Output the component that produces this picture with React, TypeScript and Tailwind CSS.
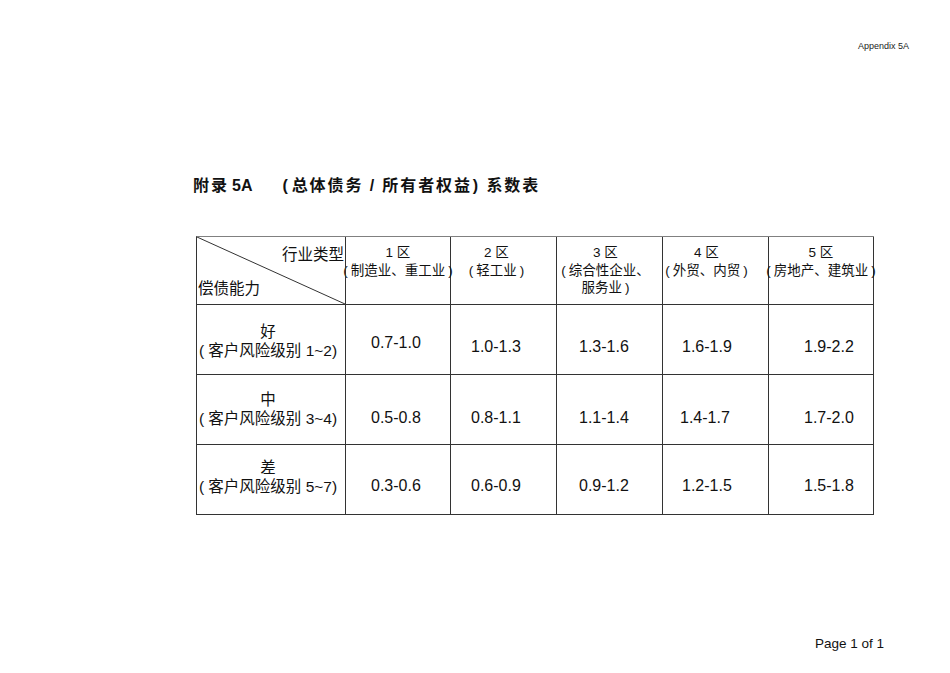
import React from "react";

const F = { fontFamily: '"Liberation Sans", "Noto Sans CJK SC", sans-serif' };

type HLine = { t: string; open?: boolean; close?: boolean };

const headers: { lines: HLine[]; pr: string }[] = [
  { lines: [{ t: "1 区" }, { t: "制造业、重工业", open: true, close: true }], pr: "pr-0" },
  { lines: [{ t: "2 区" }, { t: "轻工业", open: true, close: true }], pr: "pr-[14px]" },
  { lines: [{ t: "3 区" }, { t: "综合性企业、", open: true }, { t: "服务业", close: true }], pr: "pr-[8px]" },
  { lines: [{ t: "4 区" }, { t: "外贸、内贸", open: true, close: true }], pr: "pr-[18px]" },
  { lines: [{ t: "5 区" }, { t: "房地产、建筑业", open: true, close: true }], pr: "pr-0" },
];

const rows = [
  { label: "好", sub: "( 客户风险级别 1~2)", pt: "pt-[16px]", vals: ["0.7-1.0", "1.0-1.3", "1.3-1.6", "1.6-1.9", "1.9-2.2"], vpt: ["pt-[29px]", "pt-[33px]", "pt-[33px]", "pt-[33px]", "pt-[33px]"], vpl: ["pl-[25px]", "pl-[20px]", "pl-[22px]", "pl-[19px]", "pl-[35px]"] },
  { label: "中", sub: "( 客户风险级别 3~4)", pt: "pt-[14px]", vals: ["0.5-0.8", "0.8-1.1", "1.1-1.4", "1.4-1.7", "1.7-2.0"], vpt: ["pt-[34px]", "pt-[34px]", "pt-[34px]", "pt-[34px]", "pt-[34px]"], vpl: ["pl-[25px]", "pl-[20px]", "pl-[22px]", "pl-[17px]", "pl-[35px]"] },
  { label: "差", sub: "( 客户风险级别 5~7)", pt: "pt-[12px]", vals: ["0.3-0.6", "0.6-0.9", "0.9-1.2", "1.2-1.5", "1.5-1.8"], vpt: ["pt-[32px]", "pt-[32px]", "pt-[32px]", "pt-[32px]", "pt-[32px]"], vpl: ["pl-[25px]", "pl-[20px]", "pl-[22px]", "pl-[19px]", "pl-[35px]"] },
];

export default function App() {
  return (
    <div className="w-[950px] h-[673px] bg-white text-[#111] flex flex-col overflow-hidden" style={F}>
      <div className="flex justify-end pt-[41px] pr-[41px] text-[9px] leading-[10px] text-[#222]">
        Appendix 5A
      </div>

      <div className="mt-[125px] ml-[193px] flex items-center font-bold text-[16px] leading-[20px] whitespace-nowrap">
        <span className="tracking-[2px]">附录</span>
        <span className="ml-[3px]">5A</span>
        <span className="ml-[30px] tracking-[1.9px]">
          (<span className="ml-[2px]">总体债务 / 所有者权益</span><span className="ml-[1px]">) 系数表</span>
        </span>
      </div>

      <div className="mt-[40px] ml-[196px] w-[678px] grid grid-cols-[149px_105px_106px_106px_106px_105px] grid-rows-[68px_70px_70px_70px] border-l border-t border-l-[#333] border-t-[#808080]">
        <div className="relative border-r border-b border-[#333] text-[15.5px] leading-[18px]">
          <svg className="absolute left-0 top-0" width="148" height="67" viewBox="0 0 148 67">
            <line x1="0" y1="0" x2="148" y2="67" stroke="#333" strokeWidth="1" />
          </svg>
          <div className="flex justify-end pr-[1px] pt-[9px]">行业类型</div>
          <div className="pl-[1px] pt-[16px]">偿债能力</div>
        </div>
        {headers.map((h, i) => (
          <div key={i} className={`border-r border-b border-[#333] flex flex-col items-center pt-[7px] ${h.pr} text-[13.5px] leading-[17.5px] whitespace-nowrap`}>
            {h.lines.map((l, j) => (
              <div key={j} className="flex justify-center w-full">
                <span>
                  {l.open ? <span className="mr-[3px]">(</span> : null}
                  {l.t}
                  {l.close ? <span className="ml-[3px]">)</span> : null}
                </span>
              </div>
            ))}
          </div>
        ))}

        {rows.map((r, ri) => (
          <React.Fragment key={ri}>
            <div className={`border-r border-b border-[#333] flex flex-col items-center ${r.pt} text-[15.5px] leading-[21px] whitespace-nowrap`}>
              <div className="flex justify-center w-full pr-[6px]"><span>{r.label}</span></div>
              <div className="flex justify-center w-full pr-[6px] -mt-[2px]"><span>{r.sub}</span></div>
            </div>
            {r.vals.map((v, vi) => (
              <div key={vi} className={`border-r border-b border-[#333] ${r.vpt[vi]} ${r.vpl[vi]} text-[16px] leading-[18px] whitespace-nowrap`}>
                {v}
              </div>
            ))}
          </React.Fragment>
        ))}
      </div>

      <div className="mt-[121px] flex justify-end pr-[66px] text-[13.5px] leading-[16px]">
        Page 1 of 1
      </div>
    </div>
  );
}
